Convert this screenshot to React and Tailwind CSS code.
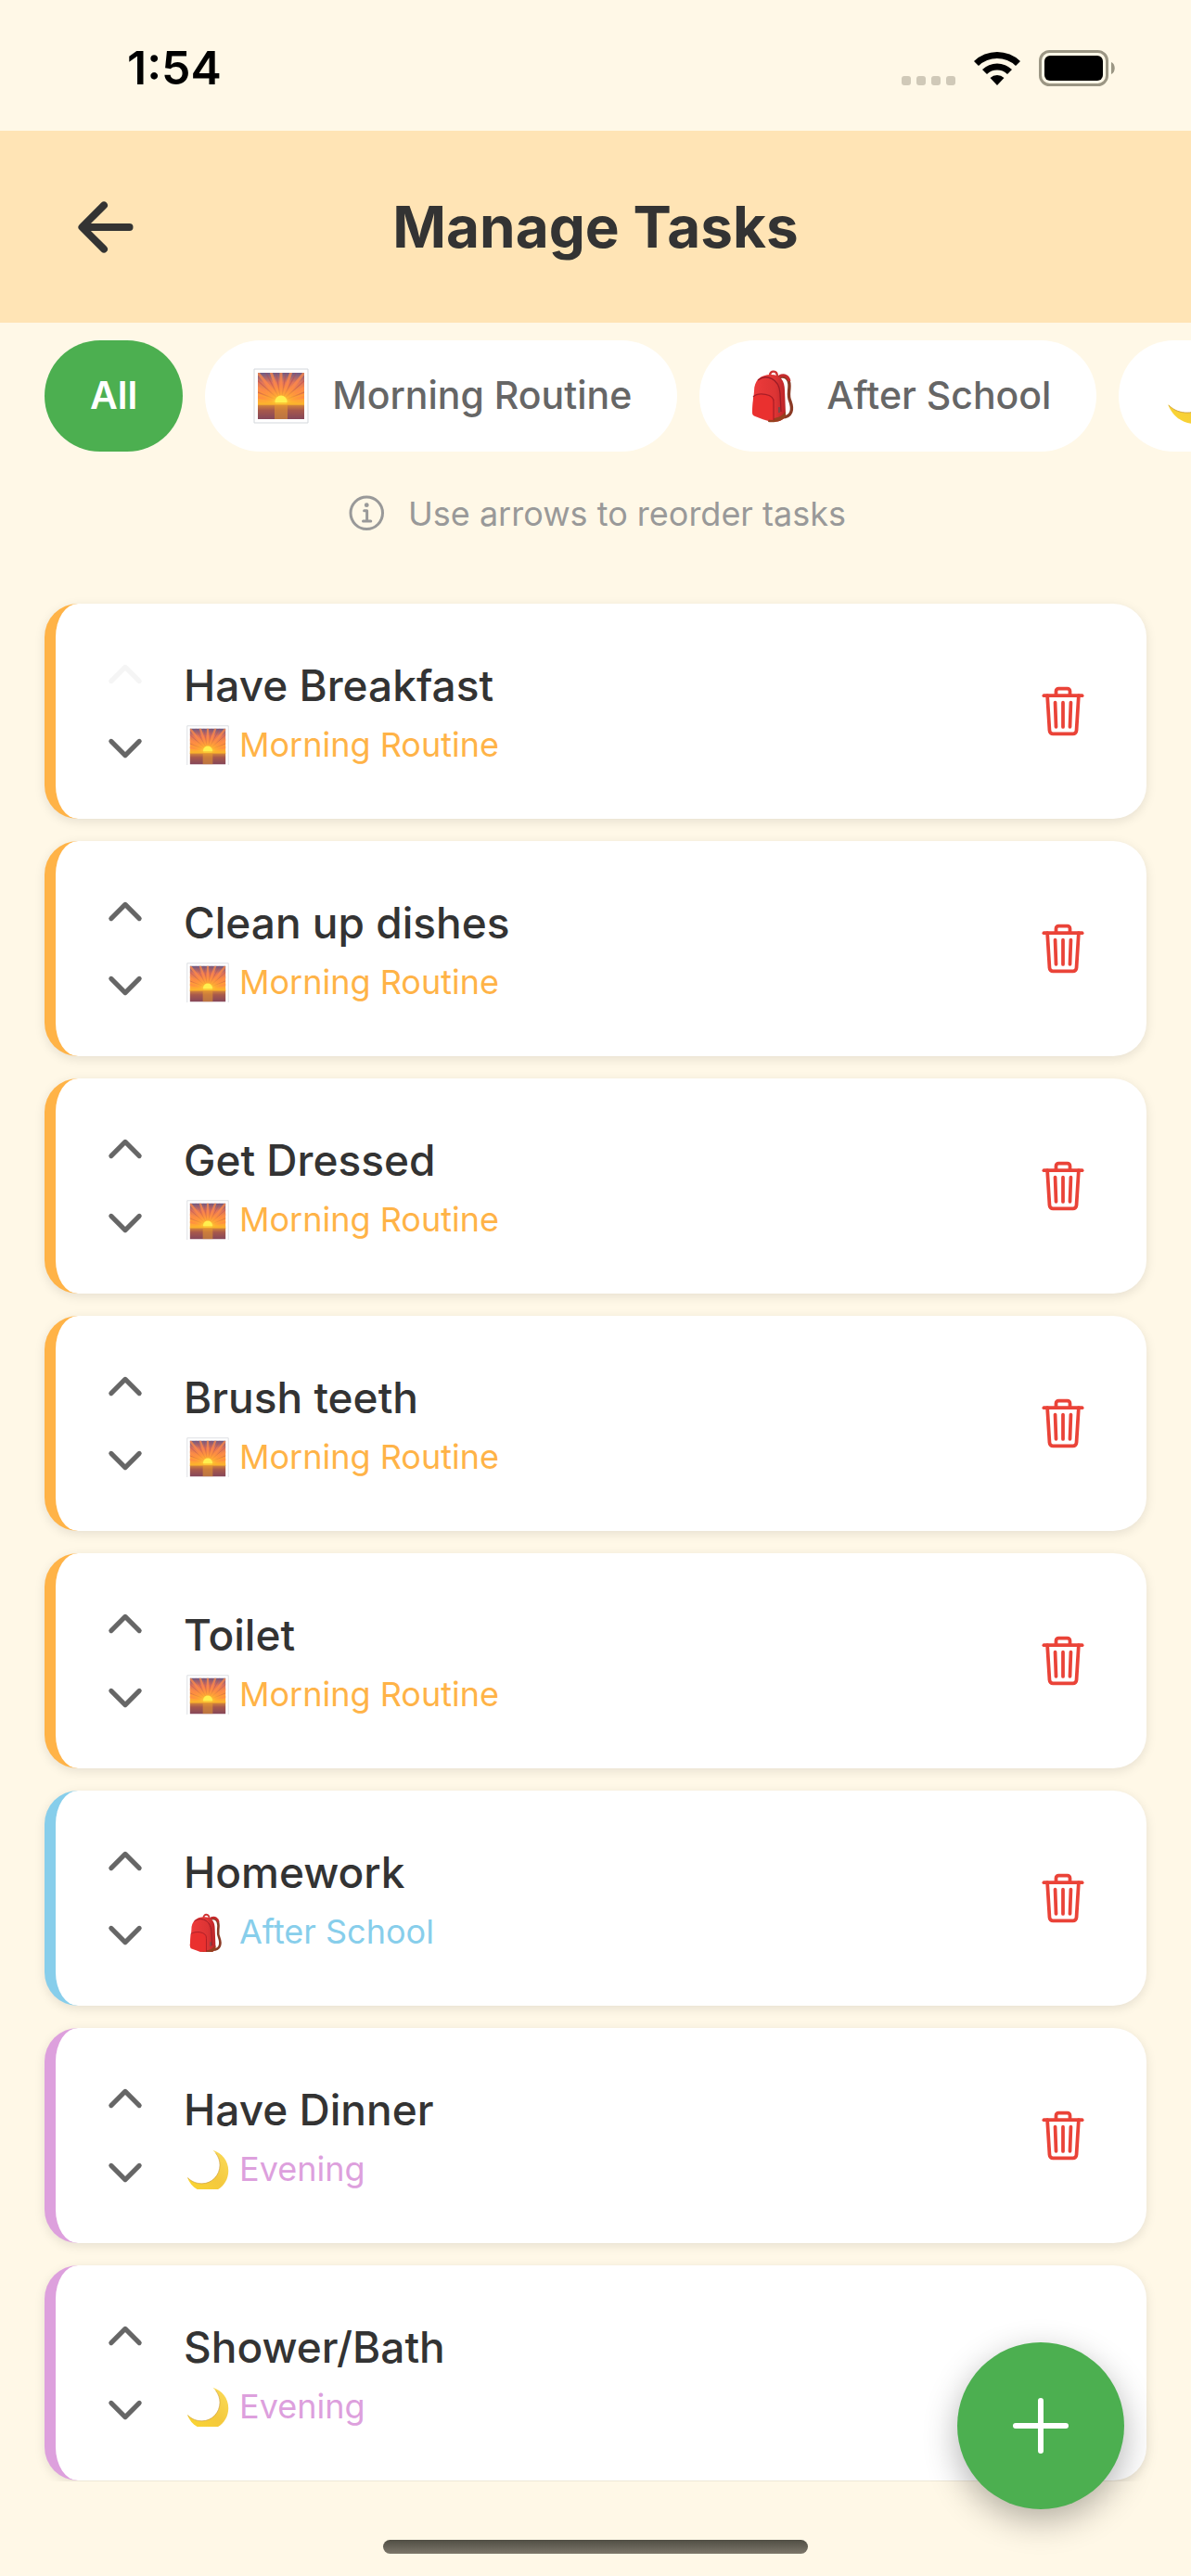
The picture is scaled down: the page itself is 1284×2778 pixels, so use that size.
import React, { useState } from "react";
import {
  IoAdd,
  IoArrowBack,
  IoChevronDown,
  IoChevronUp,
  IoInformationCircleOutline,
  IoTrashOutline,
} from "react-icons/io5";

const SunriseIcon = ({ className }) => (
  <svg viewBox="0 0 60 60" className={className} aria-hidden="true">
    <defs>
      <linearGradient id="sky" x1="0" y1="0" x2="0" y2="1">
        <stop offset="0" stopColor="#6b5a85" />
        <stop offset="0.3" stopColor="#e0755a" />
        <stop offset="0.65" stopColor="#ff9a3d" />
        <stop offset="1" stopColor="#ffc02e" />
      </linearGradient>
      <linearGradient id="sea" x1="0" y1="0" x2="0" y2="1">
        <stop offset="0" stopColor="#d98a3a" />
        <stop offset="0.4" stopColor="#a8594b" />
        <stop offset="1" stopColor="#85475a" />
      </linearGradient>
      <radialGradient id="glow" cx="0.5" cy="0.9" r="0.6">
        <stop offset="0" stopColor="#fff04a" />
        <stop offset="0.35" stopColor="#ffb52e" stopOpacity="0.8" />
        <stop offset="1" stopColor="#ff7a3d" stopOpacity="0" />
      </radialGradient>
      <clipPath id="skyClip">
        <path d="M5 5h50v35H5z" />
      </clipPath>
    </defs>
    <path d="M1 1h58v58H1z" fill="#fff" stroke="#d3d7dc" strokeWidth="1" />
    <path d="M5 5h50v35H5z" fill="url(#sky)" />
    <g clipPath="url(#skyClip)">
      <path
        d="M30 36L-2 30M30 36L-2 17M30 36L5 5M30 36L18 1M30 36V1M30 36L42 1M30 36L55 5M30 36L62 17M30 36L62 30"
        stroke="#ff8a4a"
        strokeWidth="3"
        opacity="0.75"
      />
      <path
        d="M30 36L0 24M30 36L3 12M30 36L12 2M30 36L24 1M30 36L36 1M30 36L48 2M30 36L57 12M30 36L60 24"
        stroke="#b34a55"
        strokeWidth="1.2"
        opacity="0.5"
      />
      <path d="M5 5h50v35H5z" fill="url(#glow)" />
      <circle cx="30" cy="36" r="6.5" fill="#fff04f" />
    </g>
    <path d="M5 39h50v16H5z" fill="url(#sea)" />
    <path d="M5 37h50v3H5z" fill="#f9b32c" opacity="0.7" />
    <path d="M23 40h14v15H23z" fill="#f0a22c" opacity="0.5" />
  </svg>
);

const BackpackIcon = ({ className }) => (
  <svg viewBox="0 0 60 60" className={className} aria-hidden="true">
    <defs>
      <linearGradient id="bag" x1="0" y1="0" x2="1" y2="0">
        <stop offset="0" stopColor="#ee3b3b" />
        <stop offset="0.7" stopColor="#dc3434" />
        <stop offset="1" stopColor="#bb2328" />
      </linearGradient>
    </defs>
    <path d="M33 10c7-3 12 1 12 9 0 7-2 11 1 17 3 8 2 17-9 17" fill="none" stroke="#8a3a25" strokeWidth="3.4" />
    <path d="M34 9c6-3 10 0 11 5" fill="none" stroke="#c42a2c" strokeWidth="3" />
    <path d="M24 8c0-6 8-6 8 1" fill="none" stroke="#cf3333" strokeWidth="2.4" />
    <path d="M7 25C7 13 14 7 25 7s15 7 15 17l1 25c0 6-6 9-13 9-8-1-14-4-20-6-3-1-3-3-3-6z" fill="url(#bag)" />
    <path d="M22 58c8 1 17-1 19-7v-4c-5 6-11 7-18 8z" fill="#96401f" />
    <path d="M11 13c9-7 23-2 24 14l1 20" fill="none" stroke="#9c1c26" strokeWidth="1.3" />
    <path d="M6 32c3-6 22-5 22 5v19c-6 0-13-2-20-5-2-1-3-2-3-5z" fill="#ea302f" />
    <path d="M6 31c5-5 23-4 22 6v19" fill="none" stroke="#a91d26" strokeWidth="1.2" />
    <path d="M34 42v6" stroke="#6a5050" strokeWidth="1.6" />
  </svg>
);

const MoonIcon = ({ className }) => (
  <svg viewBox="0 0 60 60" className={className} aria-hidden="true">
    <defs>
      <linearGradient id="moon" x1="0" y1="1" x2="1" y2="0">
        <stop offset="0" stopColor="#fbd72f" />
        <stop offset="0.5" stopColor="#f4c93e" />
        <stop offset="1" stopColor="#fbdc5a" />
      </linearGradient>
    </defs>
    <path
      d="M37 1c13 4 22 15 22 29 0 17-13 30-29 30C17 60 6 52 1 39c6 6 13 9 21 9 14 0 25-12 25-26 0-8-3-15-10-21z"
      fill="url(#moon)"
    />
    <path d="M2 40c6 6 13 8 20 8 14 0 25-12 25-26 0-6-2-12-6-17" fill="none" stroke="#c99a3c" strokeWidth="0.8" />
  </svg>
);

const routines = {
  morning: {
    label: "Morning Routine",
    Icon: SunriseIcon,
    text: "text-[#ffb347]",
    border: "border-[#ffb347]",
  },
  school: {
    label: "After School",
    Icon: BackpackIcon,
    text: "text-[#87ceeb]",
    border: "border-[#87ceeb]",
  },
  evening: {
    label: "Evening",
    Icon: MoonIcon,
    text: "text-[#dda0dd]",
    border: "border-[#dda0dd]",
  },
};

const initialTasks = [
  { id: 1, title: "Have Breakfast", routine: "morning" },
  { id: 2, title: "Clean up dishes", routine: "morning" },
  { id: 3, title: "Get Dressed", routine: "morning" },
  { id: 4, title: "Brush teeth", routine: "morning" },
  { id: 5, title: "Toilet", routine: "morning" },
  { id: 6, title: "Homework", routine: "school" },
  { id: 7, title: "Have Dinner", routine: "evening" },
  { id: 8, title: "Shower/Bath", routine: "evening" },
];

function StatusBar() {
  return (
    <div className="flex h-[141px] items-center justify-between pt-[6px] pr-[82px] pl-[137px]">
      <span className="text-[50px] font-semibold text-black">1:54</span>
      <div className="flex items-center gap-5">
        <div className="flex gap-[6px] pt-[26px]">
          <span className="size-[10px] rounded-[3px] bg-[#d0c9b8]" />
          <span className="size-[10px] rounded-[3px] bg-[#d0c9b8]" />
          <span className="size-[10px] rounded-[3px] bg-[#d0c9b8]" />
          <span className="size-[10px] rounded-[3px] bg-[#d0c9b8]" />
        </div>
        <svg viewBox="0 0 50 37" className="h-[37px] w-[50px]" aria-hidden="true">
          <path d="M0 11a36 36 0 0 1 50 0l-5 5a29 29 0 0 0-40 0z" />
          <path d="M9 20a23 23 0 0 1 32 0l-5 5a16 16 0 0 0-22 0z" />
          <path d="M17.500 29a11 11 0 0 1 15 0L25 37z" />
        </svg>
        <svg viewBox="0 0 82 39" className="h-[39px] w-[82px]" aria-hidden="true">
          <rect x="1.500" y="1.500" width="72" height="36" rx="10" fill="none" stroke="#9b9684" strokeWidth="3" />
          <rect x="6" y="6" width="63" height="27" rx="6" />
          <path d="M78 13c5 2 5 11 0 13z" fill="#9b9684" />
        </svg>
      </div>
    </div>
  );
}

function TaskCard({ task, isFirst, onMove, onDelete }) {
  const { label, Icon, text, border } = routines[task.routine];

  return (
    <li
      className={`flex items-center gap-6 rounded-[36px] border-l-[12px] bg-white px-9 py-[37px] shadow-[0_3px_12px_rgba(0,0,0,0.1)] ${border}`}
    >
      <div className="flex flex-col gap-[2px] text-[54px] text-[#666]">
        <button
          aria-label={`Move ${task.title} up`}
          disabled={isFirst}
          onClick={() => onMove(-1)}
          className="p-3 disabled:text-[#f5f5f5]"
        >
          <IoChevronUp />
        </button>
        <button
          aria-label={`Move ${task.title} down`}
          onClick={() => onMove(1)}
          className="p-3"
        >
          <IoChevronDown />
        </button>
      </div>
      <div className="flex-1">
        <h2 className="text-[46px] leading-[60px] font-medium text-[#333]">{task.title}</h2>
        <p className={`mt-3 flex items-center gap-2 text-[36px] leading-[44px] ${text}`}>
          <span className="flex h-[43px] w-[52px] justify-center overflow-hidden">
            <Icon className="size-[46px] shrink-0" />
          </span>
          {label}
        </p>
      </div>
      <button
        aria-label={`Delete ${task.title}`}
        onClick={onDelete}
        className="p-6 text-[60px] text-[#ea4338]"
      >
        <IoTrashOutline />
      </button>
    </li>
  );
}

function App() {
  const [tasks, setTasks] = useState(initialTasks);
  const [filter, setFilter] = useState("all");

  const visibleTasks = tasks.filter((task) => filter === "all" || task.routine === filter);

  const handleMove = (task, step) => {
    const neighbour = visibleTasks[visibleTasks.indexOf(task) + step];
    if (!neighbour) return;
    setTasks(tasks.map((t) => (t === task ? neighbour : t === neighbour ? task : t)));
  };

  const handleDelete = (task) => {
    setTasks(tasks.filter((t) => t.id !== task.id));
  };

  const chipColor = (key) => (filter === key ? "bg-[#4caf50] text-white" : "bg-white text-[#666]");

  return (
    <div className="relative flex min-h-screen flex-col bg-[#fff8e7] font-['Inter',sans-serif]">
      <StatusBar />
      <header className="grid h-[207px] grid-cols-[84px_1fr_84px] items-center bg-[#ffe4b5] px-[72px] text-[#333]">
        <button aria-label="Back" className="text-[84px]">
          <IoArrowBack />
        </button>
        <h1 className="text-center text-[62px] font-bold">Manage Tasks</h1>
      </header>

      <nav className="flex gap-6 overflow-hidden px-12 pt-[19px] text-[41px] font-medium">
        <button
          onClick={() => setFilter("all")}
          className={`h-[120px] shrink-0 rounded-[60px] px-[49px] font-semibold ${chipColor("all")}`}
        >
          All
        </button>
        {Object.entries(routines).map(([key, { label, Icon }]) => (
          <button
            key={key}
            onClick={() => setFilter(key)}
            className={`flex h-[120px] shrink-0 items-center gap-[22px] rounded-[60px] px-[49px] ${chipColor(key)}`}
          >
            <Icon className="mx-[3px] size-[60px]" />
            {label}
          </button>
        ))}
      </nav>

      <p className="flex items-center justify-center gap-5 pt-[43px] text-[36px] leading-[48px] text-[#999]">
        <IoInformationCircleOutline className="text-[48px]" />
        Use arrows to reorder tasks
      </p>

      <main className="flex-1 overflow-hidden px-12 pt-[73px]">
        <ul className="flex flex-col gap-6">
          {visibleTasks.map((task, index) => (
            <TaskCard
              key={task.id}
              task={task}
              isFirst={index === 0}
              onMove={(step) => handleMove(task, step)}
              onDelete={() => handleDelete(task)}
            />
          ))}
        </ul>
      </main>

      <footer className="flex h-[102px] items-end justify-center pb-6">
        <div className="h-[15px] w-[458px] rounded-full bg-linear-to-b from-[#504e44] to-[#7d776b]" />
      </footer>

      <button
        aria-label="Add task"
        className="fixed right-[72px] bottom-[72px] flex size-[180px] items-center justify-center rounded-full bg-[#4caf50] text-[96px] text-white shadow-[0_12px_36px_rgba(0,0,0,0.3)]"
      >
        <IoAdd />
      </button>
    </div>
  );
}

export default App;
